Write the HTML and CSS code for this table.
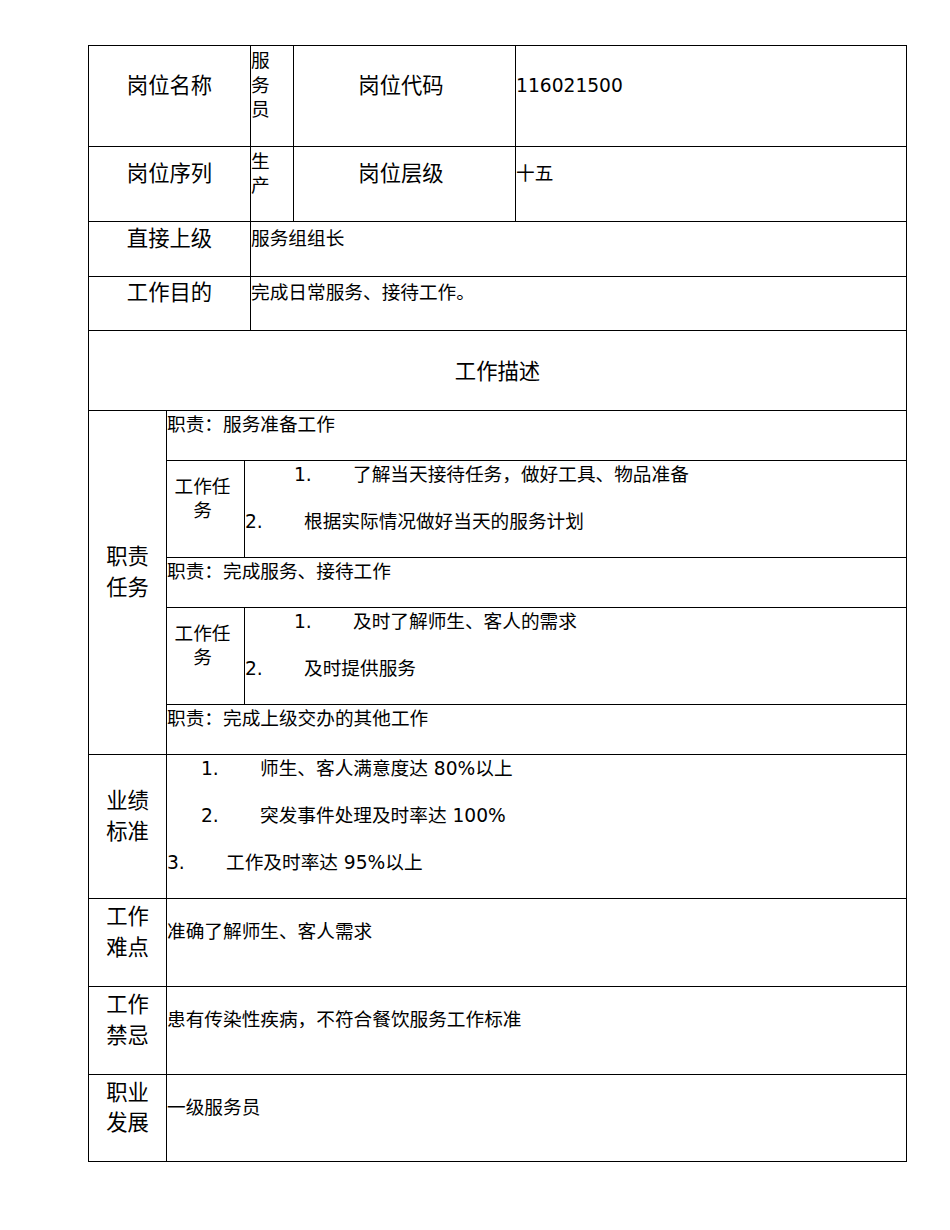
FILE: index.html
```html
<!DOCTYPE html>
<html lang="zh-CN">
<head>
<meta charset="utf-8">
<title>岗位说明书</title>
<link rel="stylesheet" href="styles.css">
</head>
<body>
<div class="page">
<table class="sheet">
  <colgroup>
    <col class="c1"><col class="c2"><col class="c3"><col class="c4"><col class="c5"><col class="c6">
  </colgroup>
  <tbody>
    <tr class="r1">
      <td colspan="3" class="lab">岗位名称</td>
      <td class="val"><div class="narrow">服务员</div></td>
      <td class="lab lab-mid">岗位代码</td>
      <td class="val latin">116021500</td>
    </tr>
    <tr class="r2">
      <td colspan="3" class="lab">岗位序列</td>
      <td class="val"><div class="narrow">生产</div></td>
      <td class="lab lab-mid">岗位层级</td>
      <td class="val">十五</td>
    </tr>
    <tr class="r3">
      <td colspan="3" class="lab">直接上级</td>
      <td colspan="3" class="val">服务组组长</td>
    </tr>
    <tr class="r4">
      <td colspan="3" class="lab">工作目的</td>
      <td colspan="3" class="val">完成日常服务、接待工作。</td>
    </tr>
    <tr class="r5">
      <td colspan="6" class="head">工作描述</td>
    </tr>
    <tr class="r6">
      <td rowspan="5" class="lab side"><span class="two">职责任务</span></td>
      <td colspan="5" class="val">职责：服务准备工作</td>
    </tr>
    <tr class="r7">
      <td class="sublab">工作任务</td>
      <td colspan="4" class="val">
        <div class="item ind-a"><span class="num">1.</span>了解当天接待任务，做好工具、物品准备</div>
        <div class="item"><span class="num">2.</span>根据实际情况做好当天的服务计划</div>
      </td>
    </tr>
    <tr class="r8">
      <td colspan="5" class="val">职责：完成服务、接待工作</td>
    </tr>
    <tr class="r9">
      <td class="sublab">工作任务</td>
      <td colspan="4" class="val">
        <div class="item ind-a"><span class="num">1.</span>及时了解师生、客人的需求</div>
        <div class="item"><span class="num">2.</span>及时提供服务</div>
      </td>
    </tr>
    <tr class="r10">
      <td colspan="5" class="val">职责：完成上级交办的其他工作</td>
    </tr>
    <tr class="r11">
      <td class="lab side"><span class="two">业绩标准</span></td>
      <td colspan="5" class="val">
        <div class="item ind-b"><span class="num">1.</span>师生、客人满意度达 80%以上</div>
        <div class="item ind-b"><span class="num">2.</span>突发事件处理及时率达 100%</div>
        <div class="item"><span class="num">3.</span>工作及时率达 95%以上</div>
      </td>
    </tr>
    <tr class="r12">
      <td class="lab side"><span class="two">工作难点</span></td>
      <td colspan="5" class="val">准确了解师生、客人需求</td>
    </tr>
    <tr class="r13">
      <td class="lab side"><span class="two">工作禁忌</span></td>
      <td colspan="5" class="val">患有传染性疾病，不符合餐饮服务工作标准</td>
    </tr>
    <tr class="r14">
      <td class="lab side"><span class="two">职业发展</span></td>
      <td colspan="5" class="val">一级服务员</td>
    </tr>
  </tbody>
</table>
</div>
</body>
</html>
```

FILE: styles.css
```css
html, body {
  margin: 0;
  padding: 0;
  background: #fff;
}

body {
  font-family: "DejaVu Sans", "Noto Sans CJK SC", sans-serif;
  color: #000;
}

.page {
  padding: 45px 0 0 88px;
}

.sheet {
  table-layout: fixed;
  border-collapse: separate;
  border-spacing: 0;
  width: 819px;
  border-top: 1px solid #000;
  border-left: 1px solid #000;
}

.c1 { width: 78px; }
.c2 { width: 78px; }
.c3 { width: 6px; }
.c4 { width: 43px; }
.c5 { width: 222px; }
.c6 { width: 391px; }

.sheet td {
  border-right: 1px solid #000;
  border-bottom: 1px solid #000;
  padding: 0 0 20px 0;
  vertical-align: middle;
  box-sizing: border-box;
}

.r1 { height: 101px; }
.r2 { height: 75px; }
.r3 { height: 55px; }
.r4 { height: 54px; }
.r5 { height: 80px; }
.r6 { height: 50px; }
.r7 { height: 97px; }
.r8 { height: 50px; }
.r9 { height: 97px; }
.r10 { height: 50px; }
.r11 { height: 144px; }
.r12 { height: 88px; }
.r13 { height: 88px; }
.r14 { height: 87px; }

.lab {
  font-size: 21.33px;
  line-height: 30.5px;
  text-align: center;
}

.lab-mid {
  padding-right: 7px !important;
}

.side {
  padding-left: 8px !important;
  padding-right: 8px !important;
}

.two {
  display: block;
  width: 43px;
  margin: 0 auto;
}

.val {
  font-size: 18.67px;
  line-height: 24.5px;
  text-align: left;
}

.narrow {
  width: 20px;
}

.sheet td.head {
  font-size: 21.33px;
  line-height: 30.5px;
  text-align: center;
  padding: 4px 0 0 0;
}

.sheet td.sublab {
  font-size: 18.67px;
  line-height: 24.5px;
  text-align: center;
  padding-left: 2px;
  padding-right: 8px;
}

.item {
  white-space: nowrap;
}

.item + .item {
  margin-top: 22.5px;
}

.num {
  display: inline-block;
  width: 59px;
}

.ind-a {
  padding-left: 49px;
}

.ind-b {
  padding-left: 34px;
}
```
